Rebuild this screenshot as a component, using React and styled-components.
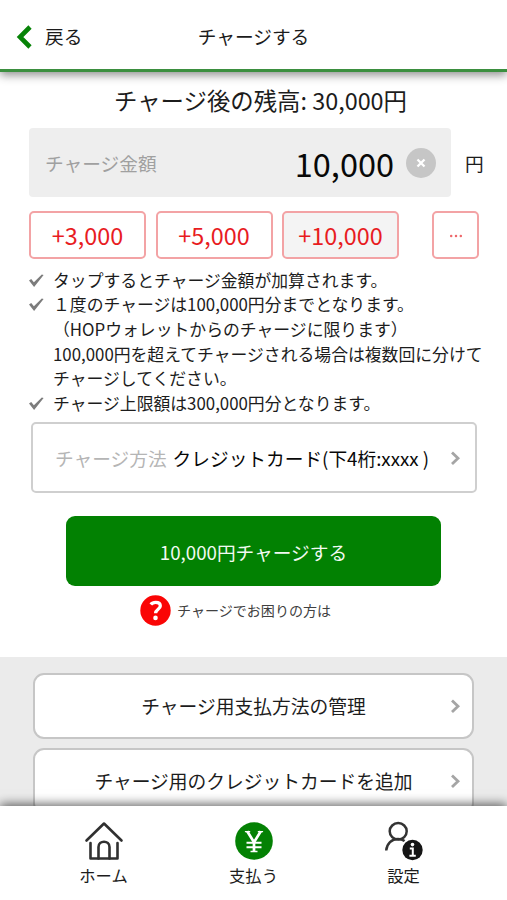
import React from "react";
import styled, { createGlobalStyle } from "styled-components";

const GlobalStyle = createGlobalStyle`
  * { box-sizing: border-box; }
  html, body { margin: 0; padding: 0; background: #fff; }
  body, button { font-family: "Noto Sans CJK JP", sans-serif; color: #1c1c1c; }
  button { margin: 0; padding: 0; border: 0; background: none; white-space: nowrap; }
  svg { display: block; flex: none; }
`;

const Screen = styled.div`
  width: 507px;
  height: 900px;
  display: flex;
  flex-direction: column;
  overflow: hidden;
  white-space: nowrap;
`;

const Header = styled.header`
  flex: none;
  height: 72px;
  display: grid;
  grid-template-columns: 1fr auto 1fr;
  align-items: center;
  padding: 2px 16px 0;
  border-bottom: 3px solid #3b8f3f;
  box-shadow: 0 3px 9px rgba(0, 0, 0, 0.45);
  z-index: 1;
`;

const BackButton = styled.button`
  display: flex;
  align-items: center;
  gap: 13px;
  font-size: 18.7px;

  svg { margin-top: 2px; }
`;

const Title = styled.h1`
  margin: 0;
  font-size: 18.7px;
  font-weight: 400;
`;

const Content = styled.main`
  flex: none;
  height: 585px;
  display: flex;
  flex-direction: column;
`;

const Balance = styled.p`
  margin: 10px 0 0;
  padding-left: 14px;
  height: 36px;
  line-height: 36px;
  font-size: 23.4px;
  text-align: center;
`;

const AmountRow = styled.div`
  display: flex;
  align-items: center;
  gap: 14px;
  margin: 10px 0 0 29px;
  font-size: 18.7px;
`;

const AmountField = styled.div`
  width: 422px;
  height: 69px;
  display: flex;
  align-items: center;
  padding: 0 15px 0 16px;
  border-radius: 4px;
  background: #eee;
`;

const Label = styled.span`
  color: ${({ $color }) => $color};
  font-size: 18.7px;
`;

const Amount = styled.span`
  margin-left: auto;
  margin-right: 12px;
  font-size: 32.5px;
  line-height: 48px;
  color: #080808;
`;

const QuickRow = styled.div`
  display: flex;
  gap: 9.5px;
  margin: 14px 28px 0 29px;
`;

const QuickButton = styled.button`
  width: 117px;
  height: 48px;
  border: 2px solid #f3a3a5;
  border-radius: 5px;
  background: ${({ $active }) => ($active ? "#f4f4f4" : "#fff")};
  color: #e81c1f;
  font-size: 23.4px;
  line-height: 43px;
`;

const MoreButton = styled(QuickButton)`
  width: 47px;
  margin-left: auto;
  padding: 2px 0 0;
  display: flex;
  align-items: center;
  justify-content: center;
`;

const Notes = styled.ul`
  list-style: none;
  margin: 8.5px 0 0 28px;
  padding: 0;
`;

const Note = styled.li`
  display: flex;
  gap: 9px;
  font-size: 16.83px;
  line-height: 24.67px;

  svg { margin-top: 5px; }
`;

const MethodButton = styled.button`
  flex: none;
  width: 446px;
  height: 71px;
  display: flex;
  align-items: center;
  margin: 6.5px 0 0 31px;
  padding: 0 14px 0 22px;
  border: 2px solid #cfcfcf;
  border-radius: 5px;
  font-size: 18.7px;

  svg { margin-left: auto; }
`;

const MethodValue = styled.span`
  margin-left: 6px;
  color: #080808;
`;

const ChargeButton = styled.button`
  flex: none;
  width: 375px;
  height: 70px;
  margin: 23px 0 0 66px;
  border-radius: 9px;
  background: #028102;
  color: #f2faf2;
  font-size: 18.7px;
`;

const HelpLink = styled.button`
  display: flex;
  align-items: center;
  gap: 6px;
  height: 32px;
  margin: 8px 0 0 140px;
  font-size: 14.05px;
  color: #414141;
`;

const Manage = styled.section`
  flex: 1;
  min-height: 0;
  display: flex;
  flex-direction: column;
  gap: 9px;
  padding: 16px 33px 0;
  overflow: hidden;
  background: #ebebeb;
`;

const ManageButton = styled.button`
  flex: none;
  height: 66px;
  display: grid;
  grid-template-columns: 16px 1fr 16px;
  align-items: center;
  padding: 0 11px 2px;
  border: 2px solid #c6c6c6;
  border-radius: 11px;
  background: #fff;
  font-size: 18.75px;

  svg { justify-self: end; margin-top: 2px; }
`;

const TabBar = styled.nav`
  flex: none;
  height: 94px;
  display: flex;
  justify-content: center;
  padding: 13px 0 0;
  background: #fff;
  box-shadow: 0 -2px 10px rgba(0, 0, 0, 0.6);
  z-index: 1;
`;

const Tab = styled.button`
  width: 150px;
  display: flex;
  flex-direction: column;
  align-items: center;
  font-size: 16.3px;
  line-height: 24px;
`;

const TabIcon = styled.span`
  height: 44px;
  display: flex;
  align-items: center;
`;

const BackIcon = () => (
  <svg width="16" height="24" viewBox="0 0 16 24" fill="none" stroke="#078307" strokeWidth="4.6">
    <path d="M14 2 4 12l10 10" />
  </svg>
);

const ClearIcon = () => (
  <svg width="30" height="30" viewBox="0 0 30 30">
    <circle cx="15" cy="15" r="15" fill="#c6c6c6" />
    <path d="m11.5 11.5 7 7m0-7-7 7" stroke="#fff" strokeWidth="2.3" />
  </svg>
);

const DotsIcon = () => (
  <svg width="14" height="4" viewBox="0 0 14 4" fill="#ee686b">
    <circle cx="2.2" cy="2" r="1.25" />
    <circle cx="7" cy="2" r="1.25" />
    <circle cx="11.8" cy="2" r="1.25" />
  </svg>
);

const CheckIcon = () => (
  <svg width="16" height="15" viewBox="0 0 16 15" fill="#7c7c7c">
    <path d="M1 7.4 3.2 6l2.7 3.2L13.8 1.4 15.6 2 6.1 14Z" />
  </svg>
);

const ChevronIcon = () => (
  <svg width="12" height="16" viewBox="0 0 12 16" fill="none" stroke="#a5a5a5" strokeWidth="2.8">
    <path d="m3 2.4 6 5.8-6 5.8" />
  </svg>
);

const HelpIcon = () => (
  <svg width="31" height="31" viewBox="0 0 31 31">
    <circle cx="15.5" cy="15.5" r="15.2" fill="#fa0505" />
    <path d="M10.8 9.6C12 8 13.8 7.4 15.7 7.4c2.8 0 4.6 1.3 4.6 3.6 0 3.2-4.7 3.3-4.7 7.2" fill="none" stroke="#fff" strokeWidth="3.3" />
    <circle cx="15.5" cy="22.9" r="2.3" fill="#fff" />
  </svg>
);

const HomeIcon = () => (
  <svg width="40" height="40" viewBox="0 0 40 40" fill="none" stroke="#303030" strokeWidth="2.6" strokeLinecap="round" strokeLinejoin="round">
    <path d="M2.5 19.5 20 2.5l17.5 17" />
    <path d="M6.5 22v15.5h27V22" />
    <path d="M14.5 37.5V26c0-7 11-7 11 0v11.5" />
  </svg>
);

const YenIcon = () => (
  <svg width="38" height="38" viewBox="0 0 38 38">
    <circle cx="19" cy="19" r="18.8" fill="#048104" />
    <path d="m12.2 9.3 6.8 11 6.8-11M19 20v10" fill="none" stroke="#fff" strokeWidth="2.7" />
    <path d="M11.5 20.7h15M11.5 25.2h15" stroke="#fff" strokeWidth="2" />
    <path d="M9.9 9.6h5.3m7.6 0h5.3M15.5 29.5h7" stroke="#fff" strokeWidth="1.3" />
  </svg>
);

const SettingsIcon = () => (
  <svg width="40" height="40" viewBox="0 0 40 40">
    <ellipse cx="14.2" cy="10.3" rx="8.5" ry="8.2" fill="none" stroke="#333" strokeWidth="2.5" />
    <path d="M2.2 29.5C2.8 22.5 7.7 18 14 18c2.6 0 4.8.7 6.6 2" fill="none" stroke="#333" strokeWidth="2.5" />
    <circle cx="28.5" cy="29" r="10.2" fill="#151515" />
    <circle cx="28.5" cy="23.6" r="1.8" fill="#fff" />
    <path d="M25.8 27.6h3v7M25.4 34.8h6.4" fill="none" stroke="#fff" strokeWidth="2" />
  </svg>
);

const quickAmounts = ["+3,000", "+5,000", "+10,000"];
const notes = [
  ["タップするとチャージ金額が加算されます。"],
  [
    "１度のチャージは100,000円分までとなります。",
    "（HOPウォレットからのチャージに限ります）",
    "100,000円を超えてチャージされる場合は複数回に分けて",
    "チャージしてください。",
  ],
  ["チャージ上限額は300,000円分となります。"],
];
const manageItems = ["チャージ用支払方法の管理", "チャージ用のクレジットカードを追加"];
const tabs = [
  { label: "ホーム", Icon: HomeIcon },
  { label: "支払う", Icon: YenIcon },
  { label: "設定", Icon: SettingsIcon },
];

export default function App() {
  return (
    <Screen>
      <GlobalStyle />
      <Header>
        <BackButton><BackIcon />戻る</BackButton>
        <Title>チャージする</Title>
      </Header>
      <Content>
        <Balance>チャージ後の残高: 30,000円</Balance>
        <AmountRow>
          <AmountField>
            <Label $color="#a0a0a0">チャージ金額</Label>
            <Amount>10,000</Amount>
            <ClearIcon />
          </AmountField>
          円
        </AmountRow>
        <QuickRow>
          {quickAmounts.map((amount) => (
            <QuickButton key={amount} $active={amount === "+10,000"}>{amount}</QuickButton>
          ))}
          <MoreButton aria-label="その他の金額"><DotsIcon /></MoreButton>
        </QuickRow>
        <Notes>
          {notes.map((lines) => (
            <Note key={lines[0]}>
              <CheckIcon />
              <div>{lines.map((line) => <div key={line}>{line}</div>)}</div>
            </Note>
          ))}
        </Notes>
        <MethodButton>
          <Label $color="#b5b5b5">チャージ方法</Label>
          <MethodValue>クレジットカード(下4桁:xxxx )</MethodValue>
          <ChevronIcon />
        </MethodButton>
        <ChargeButton>10,000円チャージする</ChargeButton>
        <HelpLink><HelpIcon />チャージでお困りの方は</HelpLink>
      </Content>
      <Manage>
        {manageItems.map((item) => (
          <ManageButton key={item}>
            <span />
            <span>{item}</span>
            <ChevronIcon />
          </ManageButton>
        ))}
      </Manage>
      <TabBar>
        {tabs.map(({ label, Icon }) => (
          <Tab key={label}>
            <TabIcon><Icon /></TabIcon>
            {label}
          </Tab>
        ))}
      </TabBar>
    </Screen>
  );
}
